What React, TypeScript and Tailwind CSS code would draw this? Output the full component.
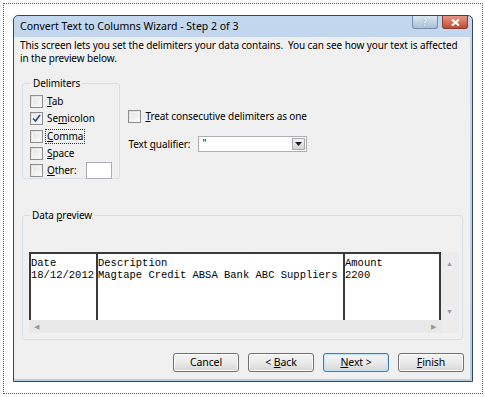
import React from 'react';

// Convert Text to Columns wizard (Excel, Windows 7 look), step 2 of 3.

const font = { fontFamily: '"Noto Sans", "Open Sans", sans-serif' };

const Check: React.FC<{ checked?: boolean }> = ({ checked }) => (
  <span className="relative inline-flex h-[13px] w-[13px] shrink-0 items-center justify-center border border-[#8e8f8f] bg-gradient-to-br from-[#dcdcdc] to-[#fbfbfb]">
    <span className="absolute inset-[1px] border border-[#f4f4f4] bg-gradient-to-br from-[#e6e6e6] to-[#f7f7f7]" />
    {checked && (
      <svg className="relative" width="9" height="9" viewBox="0 0 9 9">
        <path d="M1 4.5 L3.5 7 L8 1" fill="none" stroke="#34477e" strokeWidth="1.6" />
      </svg>
    )}
  </span>
);

// label with one underlined access-key letter
const Label: React.FC<{ before?: string; key_: string; after?: string }> = ({ before = '', key_, after = '' }) => (
  <span>
    {before}
    <span className="underline underline-offset-[1px]">{key_}</span>
    {after}
  </span>
);

const Btn: React.FC<{ children: React.ReactNode; focused?: boolean }> = ({ children, focused }) => (
  <div
    className={
      'flex h-[19px] w-[66px] items-center justify-center rounded-[3px] border bg-gradient-to-b from-[#f3f3f3] via-[#ebebeb] to-[#d6d6d6] text-[10.5px] ' +
      (focused ? 'border-[#3c7fb1] shadow-[inset_0_0_0_1px_#bfe6f8]' : 'border-[#707070] shadow-[inset_0_0_0_1px_#fcfcfc]')
    }
  >
    {children}
  </div>
);

export default function App() {
  return (
    <div className="h-[397px] w-[485px] bg-white pl-[3px] pt-[3px] text-black" style={font}>
      <div className="h-[391px] w-[480px] border border-dotted border-[#0b8f0b]">
        {/* window frame */}
        <div className="ml-[9px] mt-[11px] flex h-[367px] w-[460px] flex-col rounded-t-[5px] border border-[#3c4754] bg-gradient-to-b from-[#c3d8ee] via-[#b9d1ea] to-[#b6cfe9]">
          {/* title bar */}
          <div className="flex h-[21px] shrink-0 items-start justify-between">
            <div className="pl-[6px] pt-[3px] text-[10.5px] leading-[14px]">Convert Text to Columns Wizard - Step 2 of 3</div>
            <div className="mr-[4px] flex gap-[4px]">
              <div className="flex h-[13px] w-[26px] items-center justify-center rounded-b-[3px] border border-t-0 border-[#7a8ea6] bg-gradient-to-b from-[#dbe7f3] to-[#a9c0da]">
                <span className="text-[10px] font-bold leading-none text-[#f7f9fc] [text-shadow:0_0_1px_#506d90]">?</span>
              </div>
              <div className="flex h-[13px] w-[26px] items-center justify-center rounded-b-[3px] border border-t-0 border-[#8a3a2d] bg-gradient-to-b from-[#e49883] to-[#c24a33]">
                <svg width="9" height="7" viewBox="0 0 9 7">
                  <path d="M1 0.5 L8 6.5 M8 0.5 L1 6.5" stroke="#ffffff" strokeWidth="2" />
                </svg>
              </div>
            </div>
          </div>

          {/* client area */}
          <div className="mb-[2px] mr-[2px] flex flex-1 flex-col bg-[#f0f0f0] text-[10px] leading-[13px] tracking-[-0.1px]">
            <div className="whitespace-nowrap pl-[6px] pt-[2px]">
              This screen lets you set the delimiters your data contains.&nbsp; You can see how your text is affected
              <br />
              in the preview below.
            </div>

            <div className="mt-[12px] flex">
              {/* Delimiters group */}
              <fieldset className="ml-[8px] h-[102px] w-[96px] rounded-[3px] border border-[#d5dfe5] px-[7px] pt-[5px]">
                <legend className="ml-[1px] px-[2px] leading-[13px]">Delimiters</legend>
                <div className="flex flex-col gap-[4.3px]">
                  <div className="flex h-[13px] items-center gap-[4px]">
                    <Check />
                    <Label key_="T" after="ab" />
                  </div>
                  <div className="flex h-[13px] items-center gap-[4px]">
                    <Check checked />
                    <Label before="Se" key_="m" after="icolon" />
                  </div>
                  <div className="flex h-[13px] items-center gap-[3px]">
                    <Check />
                    <span className="px-[1px] outline outline-1 outline-offset-0 outline-dotted outline-[#333]">
                      <Label key_="C" after="omma" />
                    </span>
                  </div>
                  <div className="flex h-[13px] items-center gap-[4px]">
                    <Check />
                    <Label key_="S" after="pace" />
                  </div>
                  <div className="flex h-[13px] items-center gap-[4px]">
                    <Check />
                    <Label key_="O" after="ther:" />
                    <div className="ml-[6px] h-[17px] w-[26px] border border-[#abadb3] bg-white" />
                  </div>
                </div>
              </fieldset>

              {/* right options */}
              <div className="ml-[8px] flex flex-col pt-[33px]">
                <div className="flex h-[13px] items-center gap-[4px]">
                  <Check />
                  <Label key_="T" after="reat consecutive delimiters as one" />
                </div>
                <div className="mt-[13px] flex items-center">
                  <span className="w-[70px]">
                    <Label before="Text " key_="q" after="ualifier:" />
                  </span>
                  <div className="flex h-[16px] w-[109px] items-stretch border border-[#abadb3] bg-white">
                    <span className="flex-1 pl-[3px] leading-[12px]">"</span>
                    <div className="m-[1px] flex w-[13px] items-center justify-center border border-[#a9a9a9] bg-gradient-to-b from-[#f2f2f2] to-[#d4d4d4]">
                      <svg width="7" height="4" viewBox="0 0 7 4">
                        <path d="M0 0 H7 L3.5 4 Z" fill="#222" />
                      </svg>
                    </div>
                  </div>
                </div>
              </div>
            </div>

            {/* Data preview group */}
            <fieldset className="ml-[8px] mt-[30px] h-[131px] w-[441px] rounded-[3px] border border-[#d5dfe5] pl-[6px] pt-[30px]">
              <legend className="ml-[1px] px-[2px] leading-[13px]">
                <Label before="Data " key_="p" after="review" />
              </legend>
              <div className="flex">
                <div className="flex w-[412px] flex-col">
                  <div
                    className="flex h-[68px] border-l-2 border-r-2 border-t-2 border-[#3a3a3a] bg-white text-[10.5px] leading-[12px] tracking-normal text-black"
                    style={{ fontFamily: '"Liberation Mono", "Courier New", monospace' }}
                  >
                    <div className="w-[67px] border-r-2 border-[#3a3a3a] pt-[3px]">
                      <div>Date</div>
                      <div>18/12/2012</div>
                    </div>
                    <div className="w-[247px] border-r-2 border-[#3a3a3a] pt-[3px]">
                      <div>Description</div>
                      <div>Magtape Credit ABSA Bank ABC Suppliers</div>
                    </div>
                    <div className="flex-1 pt-[3px]">
                      <div>Amount</div>
                      <div>2200</div>
                    </div>
                  </div>
                  {/* horizontal scrollbar */}
                  <div className="flex h-[13px] items-center justify-between bg-[#e9e9e9] px-[5px] text-[7px] text-[#9a9a9a]">
                    <span>◀</span>
                    <span>▶</span>
                  </div>
                </div>
                {/* vertical scrollbar */}
                <div className="flex h-[81px] w-[17px] flex-col items-center justify-between bg-[#ececec] py-[8px] text-[7px] leading-none text-[#9a9a9a]">
                  <span>▲</span>
                  <span className="mb-[10px]">▼</span>
                </div>
              </div>
            </fieldset>

            {/* buttons */}
            <div className="mt-[13px] flex justify-end gap-[9px] pr-[6px]">
              <Btn>Cancel</Btn>
              <Btn>
                <Label before="< " key_="B" after="ack" />
              </Btn>
              <Btn focused>
                <Label key_="N" after="ext >" />
              </Btn>
              <Btn>
                <Label key_="F" after="inish" />
              </Btn>
            </div>
          </div>
        </div>
      </div>
    </div>
  );
}
